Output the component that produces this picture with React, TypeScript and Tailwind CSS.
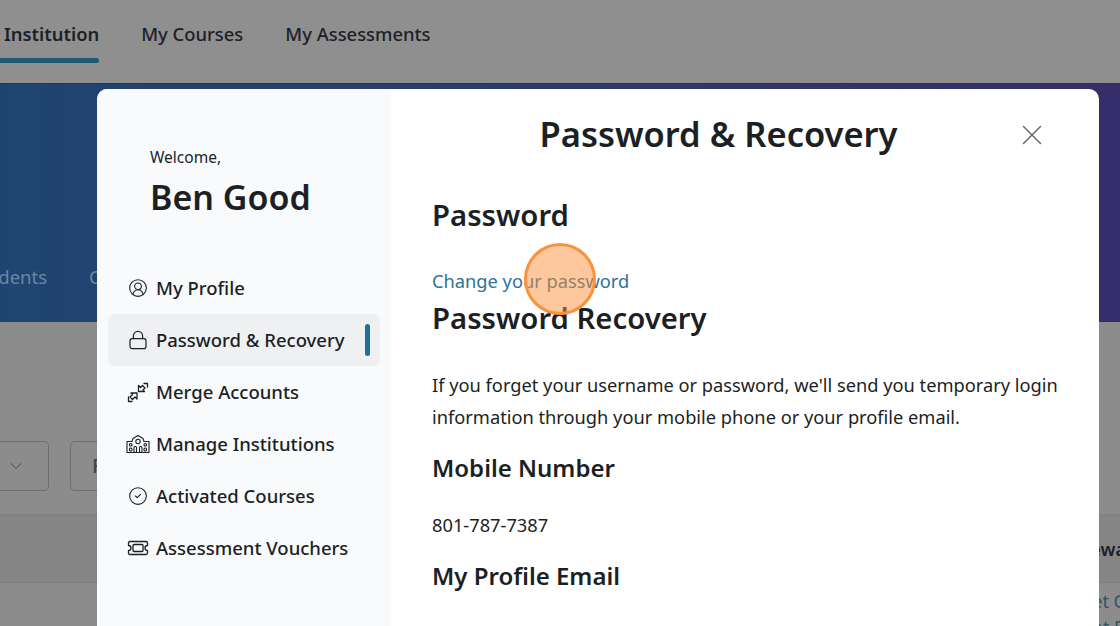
import { ChevronDown, CircleCheck, CircleUserRound, X } from "lucide-react"

const LockIcon = () => (
  <svg width="22" height="22" viewBox="0 0 22 22" fill="none" stroke="currentColor" strokeWidth="1.2" strokeLinecap="round">
    <rect x="3" y="9.600" width="16" height="10" rx="2.200" />
    <path d="M6.400 9.600V7a4.600 4.600 0 0 1 9.200 0v2.600" />
  </svg>
)

const MergeIcon = () => (
  <svg width="22" height="22" viewBox="0 0 22 22" fill="none" stroke="currentColor" strokeWidth="1.300" strokeLinejoin="round" strokeLinecap="round">
    <path d="M11.500 10.500V4.500L13.500 6.500 15.500 4.500 18 7 16 9 17.500 10.500Z" />
    <path d="M17 2.500h3.500V6" />
    <path d="M10 12V18L8 16 5.500 18.500 3 16 5.500 13.500 4 12Z" />
    <path d="M1.500 16v4.500h3.500" />
  </svg>
)

const InstitutionIcon = () => (
  <svg width="24" height="22" viewBox="0 0 24 22" fill="none" stroke="currentColor" strokeWidth="1.100" strokeLinejoin="round">
    <path d="M1 8.500h5l1-3 5-3 5 3 1 3h5v11H1Z" />
    <circle cx="12" cy="8.500" r="2.200" />
    <rect x="3.500" y="10.500" width="2.500" height="2.500" rx="1" />
    <rect x="3.500" y="15" width="2.500" height="3" rx="1" />
    <rect x="18" y="10.500" width="2.500" height="2.500" rx="1" />
    <rect x="18" y="15" width="2.500" height="3" rx="1" />
    <rect x="8" y="13.500" width="2.500" height="6" rx="1" />
    <rect x="13.500" y="13.500" width="2.500" height="6" rx="1" />
  </svg>
)

const VoucherIcon = () => (
  <svg width="22" height="22" viewBox="0 0 22 22" fill="none" stroke="currentColor" strokeWidth="1.300" strokeLinejoin="round">
    <path d="M3 4.500h16a1.500 1.500 0 0 1 1.500 1.500v2.500a2.500 2.500 0 0 0 0 5V16a1.500 1.500 0 0 1-1.500 1.500H3A1.500 1.500 0 0 1 1.500 16v-2.500a2.500 2.500 0 0 0 0-5V6A1.500 1.500 0 0 1 3 4.500Z" />
    <rect x="6" y="7.500" width="10" height="7" rx="1" />
  </svg>
)

const menu = [
  { label: "My Profile", icon: <CircleUserRound size={20} strokeWidth={1.300} /> },
  { label: "Password & Recovery", icon: <LockIcon />, active: true },
  { label: "Merge Accounts", icon: <MergeIcon /> },
  { label: "Manage Institutions", icon: <InstitutionIcon /> },
  { label: "Activated Courses", icon: <CircleCheck size={20} strokeWidth={1.300} /> },
  { label: "Assessment Vouchers", icon: <VoucherIcon /> },
]

const App = () => {
  return (
    <div className="relative h-[626px] w-[1120px] overflow-hidden bg-[#8c8c8c] font-['Noto_Sans',sans-serif] text-[#1c1f24]">
      {/* dimmed page behind the modal */}
      <div className="flex h-[83px] items-start gap-[42px] bg-[#8f8f8f] pl-[4px] pt-[20px] text-[18.400px] font-medium text-[#1d1f27]">
        <div className="relative">
          <span className="font-semibold">Institution</span>
          <div className="absolute -left-[4px] right-0 top-[38px] h-[5px] rounded-r-full bg-[#1f5a70]" />
        </div>
        <span>My Courses</span>
        <span>My Assessments</span>
      </div>
      <div className="flex h-[239px] items-start gap-[42px] border-t border-[#1f3a60] bg-gradient-to-r from-[#1e4570] to-[#362e6a] pt-[179px] text-[18.500px] text-[#6a87a5]">
        <span className="-ml-[30px]">Students</span>
        <span>Courses</span>
      </div>
      <div className="flex h-[192px] items-start gap-[21px] bg-[#8c8c8c] pt-[119px]">
        <div className="flex h-[50px] w-[49px] items-center justify-end rounded-r-[5px] border border-l-0 border-[#6e6e6e] pr-[22px] text-[#4a4a4a]">
          <ChevronDown size={20} strokeWidth={1.200} />
        </div>
        <div className="flex h-[50px] w-[120px] items-center rounded-[5px] border border-[#6e6e6e] pl-[21px] text-[20px] font-medium text-[#444]">
          F
        </div>
      </div>
      <div className="flex h-[69px] justify-end border-y border-[#7e7e7e] bg-[#858585] pt-[22px] text-[18px] font-semibold leading-[24px] text-[#1d1f27]">
        <span className="-mr-[6px]">Rewa</span>
      </div>
      <div className="flex flex-col items-end pt-[5px] text-[18px] leading-[26px] text-[#2c5566]">
        <span className="-mr-[5px]">Get C</span>
        <span className="-mr-[5px]">Get P</span>
      </div>

      {/* modal */}
      <div className="absolute left-[97px] top-[89px] flex h-[560px] w-[1002px] overflow-hidden rounded-[10px] bg-white">
        <div className="w-[294px] shrink-0 bg-[#f8fafc] px-[11px]">
          <div className="pl-[42px] pt-[58px]">
            <p className="text-[15.500px] leading-[20px]">Welcome,</p>
            <p className="mt-[8px] text-[34px] font-semibold leading-[44px]">Ben Good</p>
          </div>
          <div className="mt-[43px] flex flex-col">
            {menu.map((item) => (
              <div
                key={item.label}
                className={`relative flex h-[52px] items-center rounded-[6px] pl-[17px] text-[18.500px] font-medium ${item.active ? "bg-[#eef0f2]" : ""}`}
              >
                <div className="mr-[6px] flex w-[25px] shrink-0 justify-center">{item.icon}</div>
                <span className="whitespace-nowrap">{item.label}</span>
                {item.active && (
                  <div className="absolute right-[10px] top-[10px] h-[32px] w-[5px] rounded-full bg-[#1f6f9c]" />
                )}
              </div>
            ))}
          </div>
        </div>
        <div className="relative flex-1 pl-[41px] pr-[40px]">
          <h1 className="pr-[54px] pt-[20px] text-center text-[34.500px] font-semibold leading-[50px]">Password &amp; Recovery</h1>
          <X size={34} strokeWidth={1} className="absolute right-[50px] top-[29px] text-[#666]" />
          <h2 className="mt-[36px] text-[29.300px] font-semibold leading-[40px]">Password</h2>
          <a className="mt-[33px] block text-[18.250px] leading-[26px] text-[#2b7397]">Change your password</a>
          <h2 className="text-[29.300px] font-semibold leading-[48px]">Password Recovery</h2>
          <p className="mt-[27px] text-[18.250px] leading-[32px]">
            If you forget your username or password, we'll send you temporary login information through your mobile phone or your profile email.
          </p>
          <h3 className="mt-[17px] text-[24px] font-semibold leading-[36px]">Mobile Number</h3>
          <p className="mt-[26px] text-[18.250px] leading-[26px]">801-787-7387</p>
          <h3 className="mt-[20px] text-[24px] font-semibold leading-[36px]">My Profile Email</h3>
        </div>
      </div>

      {/* click marker */}
      <div className="absolute left-[524px] top-[243px] h-[72px] w-[72px] rounded-full border-[3px] border-[#f8923c] bg-[#fb923c]/50" />
    </div>
  )
}

export default App
